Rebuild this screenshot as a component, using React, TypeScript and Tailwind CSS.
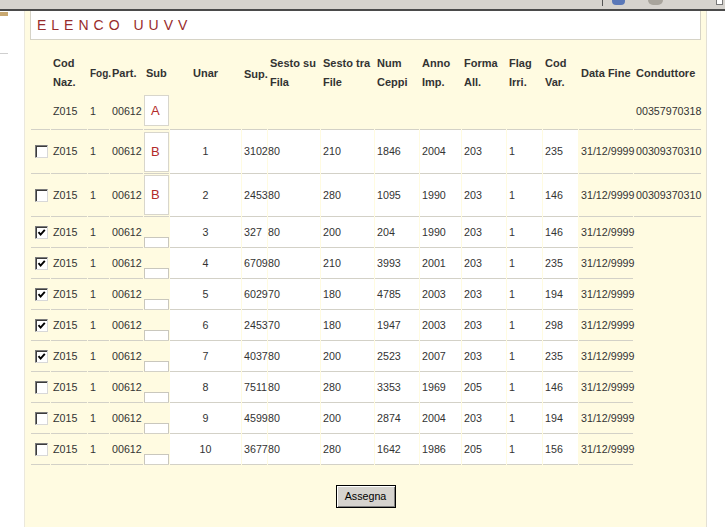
import { Fragment } from 'react';

type Row = {
  checked: boolean;
  sub?: string;
  unar: string;
  sup: string;
  fila: string;
  file: string;
  ceppi: string;
  anno: string;
  forma: string;
  flag: string;
  varieta: string;
  conduttore?: string;
};

const rows: Row[] = [
  { checked: false, sub: 'B', unar: '1', sup: '3102', fila: '80', file: '210', ceppi: '1846', anno: '2004', forma: '203', flag: '1', varieta: '235', conduttore: '00309370310' },
  { checked: false, sub: 'B', unar: '2', sup: '2453', fila: '80', file: '280', ceppi: '1095', anno: '1990', forma: '203', flag: '1', varieta: '146', conduttore: '00309370310' },
  { checked: true, unar: '3', sup: '327', fila: '80', file: '200', ceppi: '204', anno: '1990', forma: '203', flag: '1', varieta: '146' },
  { checked: true, unar: '4', sup: '6709', fila: '80', file: '210', ceppi: '3993', anno: '2001', forma: '203', flag: '1', varieta: '235' },
  { checked: true, unar: '5', sup: '6029', fila: '70', file: '180', ceppi: '4785', anno: '2003', forma: '203', flag: '1', varieta: '194' },
  { checked: true, unar: '6', sup: '2453', fila: '70', file: '180', ceppi: '1947', anno: '2003', forma: '203', flag: '1', varieta: '298' },
  { checked: true, unar: '7', sup: '4037', fila: '80', file: '200', ceppi: '2523', anno: '2007', forma: '203', flag: '1', varieta: '235' },
  { checked: false, unar: '8', sup: '7511', fila: '80', file: '280', ceppi: '3353', anno: '1969', forma: '205', flag: '1', varieta: '146' },
  { checked: false, unar: '9', sup: '4599', fila: '80', file: '200', ceppi: '2874', anno: '2004', forma: '203', flag: '1', varieta: '194' },
  { checked: false, unar: '10', sup: '3677', fila: '80', file: '280', ceppi: '1642', anno: '1986', forma: '205', flag: '1', varieta: '156' },
];

const line = 'border-b border-[#d3d1c7]';
const white = 'bg-white';

function Checkbox({ checked }: { checked: boolean }) {
  return (
    <span className="flex h-[13px] w-[13px] items-center justify-center border border-t-[#7a7a7a] border-l-[#7a7a7a] border-r-[#d8d8d8] border-b-[#d8d8d8] bg-white shadow-[inset_1px_1px_0_#3c3c3c]">
      {checked && (
        <svg width="9" height="9" viewBox="0 0 9 9">
          <path d="M1.5 4.2 L3.6 6.6 L7.8 1.8" fill="none" stroke="#000" strokeWidth="1.9" />
        </svg>
      )}
    </span>
  );
}

function Cell({ children, className = '' }: { children?: React.ReactNode; className?: string }) {
  return <td className={`p-0 whitespace-nowrap ${className}`}>{children}</td>;
}

export default function App() {
  return (
    <div className="w-[725px] h-[527px] overflow-hidden bg-white font-['Liberation_Sans',Arial,sans-serif] text-[#333]">
      {/* browser toolbar edge */}
      <div className="relative h-[11px] bg-[#d6d3ce] border-b-2 border-[#4a4a4a]">
        <span className="absolute left-[602px] top-0 h-[6px] w-px bg-[#555]" />
        <span className="absolute left-[612px] top-0 h-[5px] w-[13px] rounded-b-sm bg-[#5a78b8]" />
        <span className="absolute left-[648px] top-0 h-[5px] w-[15px] rounded-b-full bg-[#a8a49c]" />
        <span className="absolute left-[716px] top-0 h-[5px] w-[7px] border border-t-0 border-[#777] bg-white" />
      </div>

      <div className="flex h-[516px]">
        <div className="w-[25px] shrink-0 border-r border-[#ebe8dc] pt-[1px]">
          <div className="h-[4px] w-[8px] bg-[#c9a971]" />
          <div className="mt-[37px] h-px w-[8px] bg-[#cfcfcf]" />
        </div>

        <div className="w-[682px] shrink-0 bg-[#fffbe1] border-r border-[#e3e0d4]">
          <div className="mx-[5px] flex h-[29px] items-center border border-t-0 border-[#d6d3c6] bg-white pl-[6px] text-[14px] tracking-[5px] text-[#982b2b]">
            ELENCO UUVV
          </div>

          <table className="ml-[5px] mt-[12px] w-[672px] table-fixed border-separate border-spacing-x-px border-spacing-y-0 text-[10.7px]">
            <colgroup>
              <col className="w-[19px]" />
              <col className="w-[36px]" />
              <col className="w-[21px]" />
              <col className="w-[33px]" />
              <col className="w-[25px]" />
              <col className="w-[71px]" />
              <col className="w-[25px]" />
              <col className="w-[52px]" />
              <col className="w-[53px]" />
              <col className="w-[44px]" />
              <col className="w-[41px]" />
              <col className="w-[44px]" />
              <col className="w-[35px]" />
              <col className="w-[35px]" />
              <col className="w-[54px]" />
              <col className="w-[67px]" />
            </colgroup>
            <thead>
              <tr className="h-[42px] text-[11px] font-bold leading-[19px] text-left">
                <th className="p-0" />
                <th className="p-0 pl-[2px] font-bold">Cod<br />Naz.</th>
                <th className="p-0 pl-[2px] text-[10px] font-bold">Fog.</th>
                <th className="p-0 pl-[2px] font-bold">Part.</th>
                <th className="p-0 pl-[2px] font-bold">Sub</th>
                <th className="p-0 text-center font-bold">Unar</th>
                <th className="p-0 pl-[2px] pt-[2px] font-bold">Sup.</th>
                <th className="p-0 pl-[2px] font-bold whitespace-nowrap">Sesto su<br />Fila</th>
                <th className="p-0 pl-[2px] font-bold whitespace-nowrap">Sesto tra<br />File</th>
                <th className="p-0 pl-[2px] font-bold">Num<br />Ceppi</th>
                <th className="p-0 pl-[2px] font-bold">Anno<br />Imp.</th>
                <th className="p-0 pl-[2px] font-bold">Forma<br />All.</th>
                <th className="p-0 pl-[2px] font-bold">Flag<br />Irri.</th>
                <th className="p-0 pl-[2px] font-bold">Cod<br />Var.</th>
                <th className="p-0 pl-[2px] font-bold whitespace-nowrap">Data Fine</th>
                <th className="p-0 pl-[2px] font-bold">Conduttore</th>
              </tr>
            </thead>
            <tbody>
              <tr className="h-[36px]">
                <Cell className={line} />
                <Cell className={`${line} pl-[2px]`}>Z015</Cell>
                <Cell className={`${line} pl-[2px]`}>1</Cell>
                <Cell className={`${line} pl-[2px]`}>00612</Cell>
                <Cell className={`${line} align-top pt-[1px]`}>
                  <div className="flex h-[31px] w-[25px] items-center border border-[#d8d6cc] bg-white pl-[6px] text-[13px] text-[#b22a2a]">A</div>
                </Cell>
                {Array.from({ length: 10 }).map((_, i) => (
                  <Cell key={i} className={line} />
                ))}
                <Cell className={`${line} pl-[2px]`}>00357970318</Cell>
              </tr>

              {rows.map((r, i) => {
                const tall = i === 0 ? 'h-[44px]' : i === 1 ? 'h-[43px]' : 'h-[31px]';
                return (
                  <tr key={i} className={tall}>
                    <Cell className={`${line} pl-[4px]`}>
                      <Checkbox checked={r.checked} />
                    </Cell>
                    <Cell className={`${line} pl-[2px]`}>Z015</Cell>
                    <Cell className={`${line} pl-[2px]`}>1</Cell>
                    <Cell className={`${line} pl-[2px]`}>00612</Cell>
                    {r.sub ? (
                      <Cell className={line}>
                        <div className="flex h-[40px] w-[25px] items-center border border-[#d8d6cc] bg-white pl-[6px] text-[13px] text-[#b22a2a]">
                          {r.sub}
                        </div>
                      </Cell>
                    ) : (
                      <Cell className={`${line} align-bottom`}>
                        <div className="h-[10px] w-[25px] border border-b-0 border-[#c9c7bd] bg-white" />
                      </Cell>
                    )}
                    <Cell className={`${line} ${white} text-center`}>{r.unar}</Cell>
                    <Cell className={`${line} ${white} pl-[2px]`}>{r.sup}</Cell>
                    <Cell className={`${line} ${white}`}>{r.fila}</Cell>
                    <Cell className={`${line} ${white} pl-[2px]`}>{r.file}</Cell>
                    <Cell className={`${line} ${white} pl-[2px]`}>{r.ceppi}</Cell>
                    <Cell className={`${line} ${white} pl-[2px]`}>{r.anno}</Cell>
                    <Cell className={`${line} ${white} pl-[2px]`}>{r.forma}</Cell>
                    <Cell className={`${line} ${white} pl-[2px]`}>{r.flag}</Cell>
                    <Cell className={`${line} ${white} pl-[2px]`}>{r.varieta}</Cell>
                    <Cell className={`${line} pl-[2px]`}>31/12/9999</Cell>
                    {r.conduttore ? (
                      <Cell className={`${line} pl-[2px]`}>{r.conduttore}</Cell>
                    ) : (
                      <Fragment>
                        <Cell />
                      </Fragment>
                    )}
                  </tr>
                );
              })}
            </tbody>
          </table>

          <div className="mt-[20px] flex justify-center">
            <button className="h-[23px] w-[60px] border border-black bg-[#d6d3ce] text-[10.7px] text-black shadow-[inset_1px_1px_0_#fff,inset_-1px_-1px_0_#808080]">
              Assegna
            </button>
          </div>
        </div>

        <div className="flex-1 bg-white" />
      </div>
    </div>
  );
}
